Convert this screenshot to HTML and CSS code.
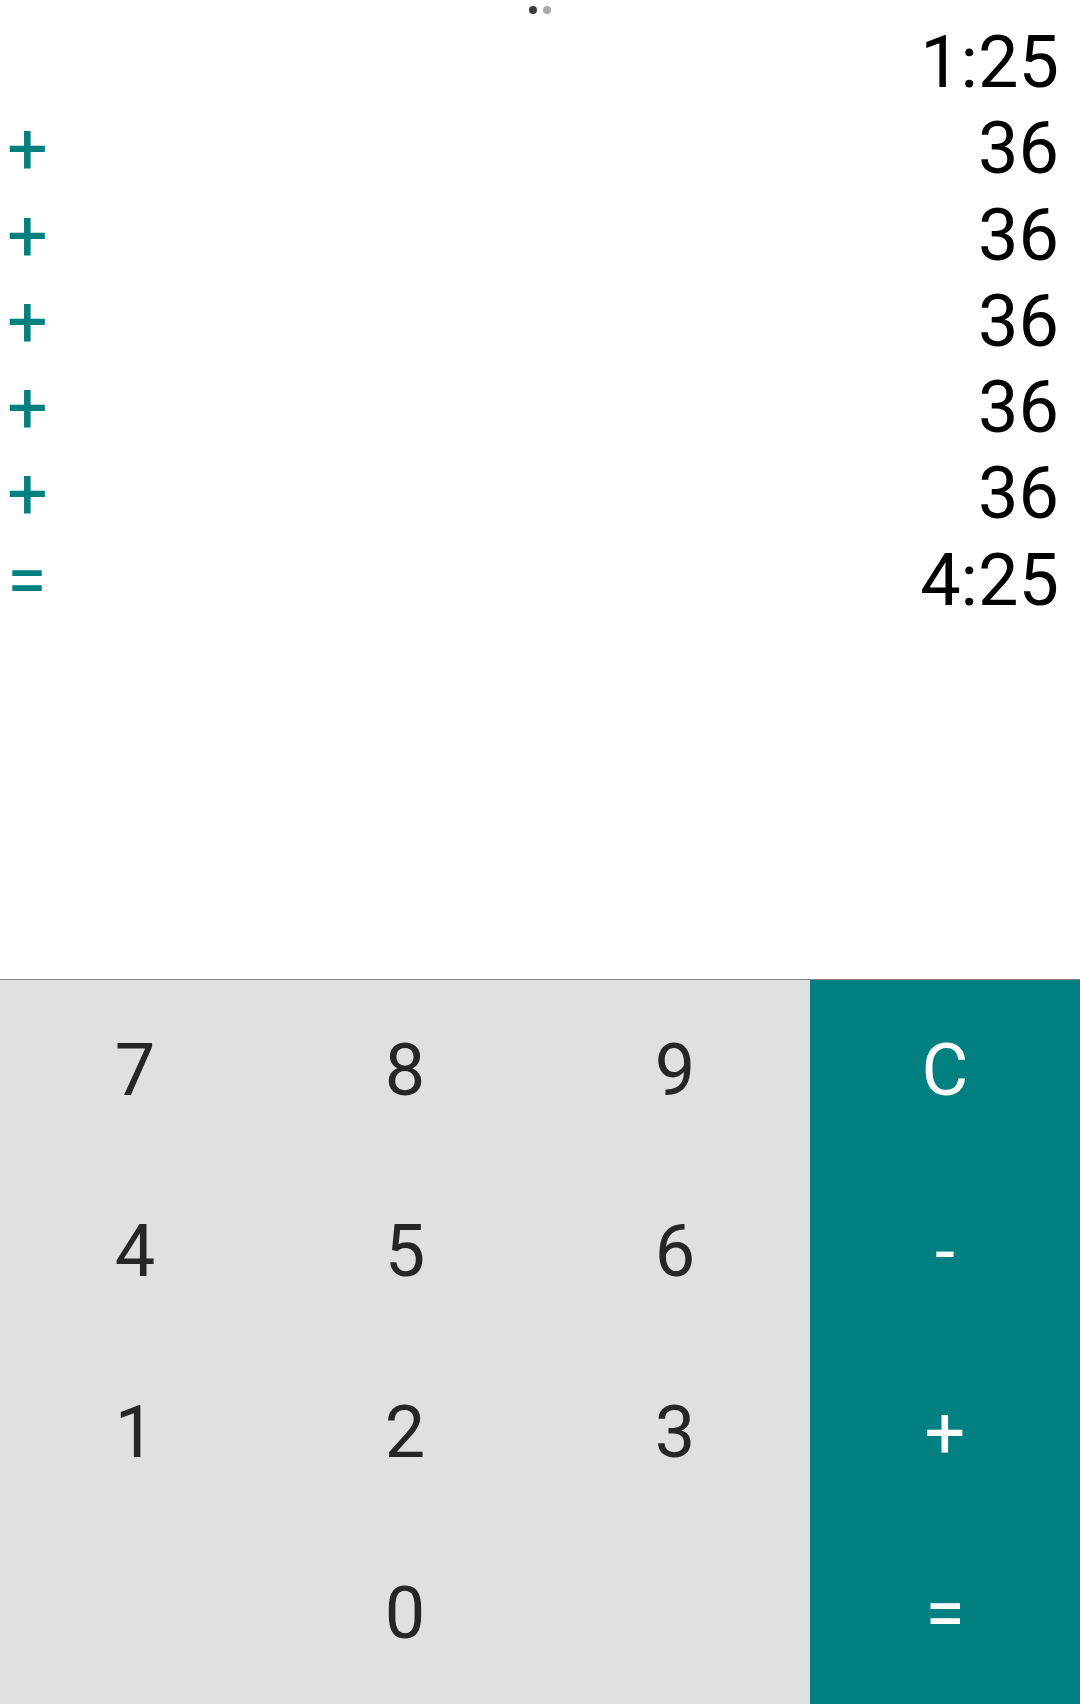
FILE: index.html
```html
<!DOCTYPE html>
<html>
<head>
<meta charset="utf-8">
<link rel="stylesheet" href="styles.css">
</head>
<body>
<div class="app">
  <div class="display">
    <div class="dots"><span class="dot dot-on"></span><span class="dot dot-off"></span></div>
    <div class="tape">
      <div class="row"><span class="sign"></span><span class="val">1:25</span></div>
      <div class="row"><span class="sign">+</span><span class="val">36</span></div>
      <div class="row"><span class="sign">+</span><span class="val">36</span></div>
      <div class="row"><span class="sign">+</span><span class="val">36</span></div>
      <div class="row"><span class="sign">+</span><span class="val">36</span></div>
      <div class="row"><span class="sign">+</span><span class="val">36</span></div>
      <div class="row"><span class="sign">=</span><span class="val">4:25</span></div>
    </div>
  </div>
  <div class="keypad">
    <div class="key">7</div>
    <div class="key">8</div>
    <div class="key">9</div>
    <div class="key op">C</div>
    <div class="key">4</div>
    <div class="key">5</div>
    <div class="key">6</div>
    <div class="key op">-</div>
    <div class="key">1</div>
    <div class="key">2</div>
    <div class="key">3</div>
    <div class="key op">+</div>
    <div class="key"></div>
    <div class="key">0</div>
    <div class="key"></div>
    <div class="key op">=</div>
  </div>
</div>
</body>
</html>
```
FILE: styles.css
```css
html, body {
  margin: 0;
  padding: 0;
  background: #ffffff;
}
body {
  font-family: Roboto, "Liberation Sans", sans-serif;
}
.app {
  width: 1080px;
  height: 1704px;
  display: flex;
  flex-direction: column;
}
.display {
  height: 979px;
  border-bottom: 1px solid #858585;
  display: flex;
  flex-direction: column;
}
.dots {
  height: 20px;
  display: flex;
  justify-content: center;
  align-items: center;
  gap: 6px;
}
.dot {
  width: 8px;
  height: 8px;
  border-radius: 50%;
}
.dot-on { background: #3c3c3c; }
.dot-off { background: #a9a9a9; }
.tape {
  display: flex;
  flex-direction: column;
  padding: 0 21px 0 7px;
}
.row {
  display: flex;
  justify-content: space-between;
  font-size: 72px;
  line-height: 86.3px;
  height: 86.3px;
}
.sign {
  color: #008080;
}
.val {
  color: #000000;
}
.keypad {
  flex: 1;
  display: grid;
  grid-template-columns: repeat(4, 1fr);
  grid-template-rows: repeat(4, 1fr);
  background: #e0e0e0;
}
.key {
  display: flex;
  align-items: center;
  justify-content: center;
  font-size: 72px;
  color: #262626;
}
.key.op {
  background: #008080;
  color: #ffffff;
}
```
